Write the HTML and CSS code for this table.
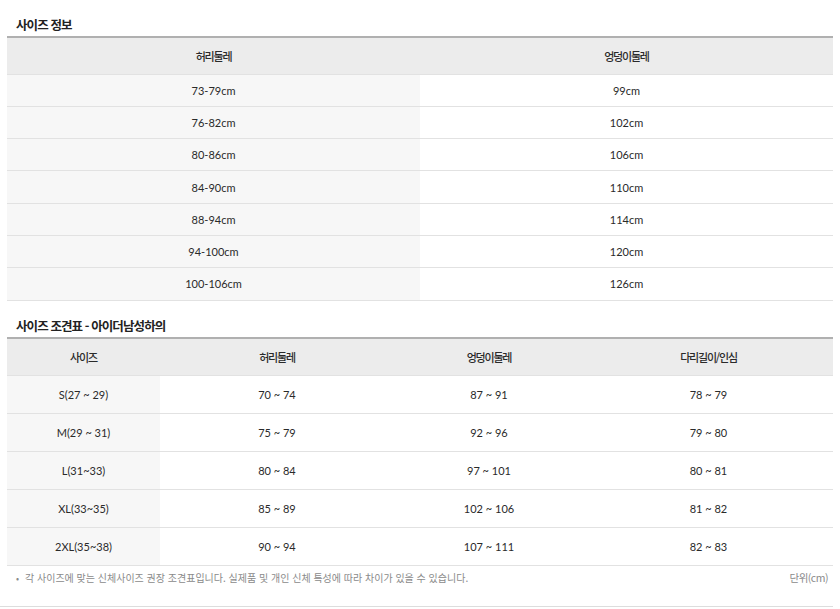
FILE: index.html
```html
<!DOCTYPE html>
<html lang="ko">
<head>
<meta charset="utf-8">
<title>사이즈 정보</title>
<link rel="stylesheet" href="styles.css">
</head>
<body>
<div class="wrap">
  <h2 class="title">사이즈 정보</h2>
  <table class="tbl tbl-info">
    <colgroup><col class="half"><col class="half"></colgroup>
    <thead>
      <tr><th class="ko">허리둘레</th><th class="ko">엉덩이둘레</th></tr>
    </thead>
    <tbody>
      <tr><td class="first">73-79cm</td><td>99cm</td></tr>
      <tr><td class="first">76-82cm</td><td>102cm</td></tr>
      <tr><td class="first">80-86cm</td><td>106cm</td></tr>
      <tr><td class="first">84-90cm</td><td>110cm</td></tr>
      <tr><td class="first">88-94cm</td><td>114cm</td></tr>
      <tr><td class="first">94-100cm</td><td>120cm</td></tr>
      <tr><td class="first">100-106cm</td><td>126cm</td></tr>
    </tbody>
  </table>

  <h2 class="title title-second">사이즈 조견표 - 아이더남성하의</h2>
  <table class="tbl tbl-chart">
    <colgroup>
      <col class="c1"><col class="c2"><col class="c3"><col class="c4">
    </colgroup>
    <thead>
      <tr><th class="ko">사이즈</th><th class="ko">허리둘레</th><th class="ko">엉덩이둘레</th><th class="ko">다리길이/인심</th></tr>
    </thead>
    <tbody>
      <tr><td class="first">S(27 ~ 29)</td><td>70 ~ 74</td><td>87 ~ 91</td><td>78 ~ 79</td></tr>
      <tr><td class="first">M(29 ~ 31)</td><td>75 ~ 79</td><td>92 ~ 96</td><td>79 ~ 80</td></tr>
      <tr><td class="first">L(31~33)</td><td>80 ~ 84</td><td>97 ~ 101</td><td>80 ~ 81</td></tr>
      <tr><td class="first">XL(33~35)</td><td>85 ~ 89</td><td>102 ~ 106</td><td>81 ~ 82</td></tr>
      <tr><td class="first">2XL(35~38)</td><td>90 ~ 94</td><td>107 ~ 111</td><td>82 ~ 83</td></tr>
    </tbody>
  </table>

  <div class="note">
    <p class="note-text"><span class="bullet">•</span>각 사이즈에 맞는 신체사이즈 권장 조견표입니다. 실제품 및 개인 신체 특성에 따라 차이가 있을 수 있습니다.</p>
    <p class="unit">단위(cm)</p>
  </div>
  <div class="bottom-line"></div>
</div>
</body>
</html>
```

FILE: styles.css
```css
html, body {
  margin: 0;
  padding: 0;
  background: #ffffff;
}

body {
  font-family: "Lato", "Noto Sans CJK KR", sans-serif;
  color: #333333;
  font-size: 11px;
}

.wrap {
  width: 826px;
  padding: 0 7px;
}

.title {
  margin: 0;
  padding: 15px 9px 1px;
  height: 20px;
  line-height: 20px;
  font-size: 12.5px;
  font-weight: 700;
  letter-spacing: -0.9px;
  color: #222222;
  font-family: "Noto Sans CJK KR", "Lato", sans-serif;
}

.title-second {
  padding-top: 15px;
  padding-bottom: 1px;
}

.tbl {
  width: 826px;
  border-collapse: collapse;
  table-layout: fixed;
  border-top: 2px solid #b0b0b0;
}

.tbl th {
  background: #ececec;
  font-weight: 500;
  font-size: 11px;
  color: #2a2a2a;
  text-align: center;
  padding: 0;
}

.tbl td {
  text-align: center;
  padding: 0;
  border-bottom: 1px solid #e2e2e2;
  font-size: 11px;
  color: #2a2a2a;
}

.tbl td.first {
  background: #f7f7f7;
}

.ko {
  font-family: "Noto Sans CJK KR", sans-serif;
  letter-spacing: -1.2px;
}

.half { width: 50%; }

.tbl-info thead tr { height: 37px; }
.tbl-info th { border-bottom: 1px solid #e2e2e2; }
.tbl-info tbody tr { height: 32.3px; }

.tbl-chart .c1 { width: 153px; }
.tbl-chart .c2 { width: 234px; }
.tbl-chart .c3 { width: 190px; }
.tbl-chart .c4 { width: 249px; }

.tbl-chart thead tr { height: 38px; }
.tbl-chart th { border-bottom: 1px solid #e2e2e2; }
.tbl-chart tbody tr { height: 38px; }

.note {
  display: flex;
  justify-content: space-between;
  align-items: flex-start;
  padding: 4px 5px 0 9px;
  height: 36px;
}

.note-text {
  margin: 0;
  line-height: 16px;
  font-size: 10px;
  letter-spacing: 0;
  color: #8a8a8a;
  font-family: "Noto Sans CJK KR", sans-serif;
}

.bullet {
  display: inline-block;
  width: 9px;
  font-size: 9px;
}

.unit {
  margin: 0;
  line-height: 16px;
  font-size: 10.5px;
  color: #8a8a8a;
  font-family: "Noto Sans CJK KR", sans-serif;
  letter-spacing: -0.5px;
}

.bottom-line {
  margin-left: -7px;
  width: 833px;
  border-top: 1px solid #dddddd;
}
```
